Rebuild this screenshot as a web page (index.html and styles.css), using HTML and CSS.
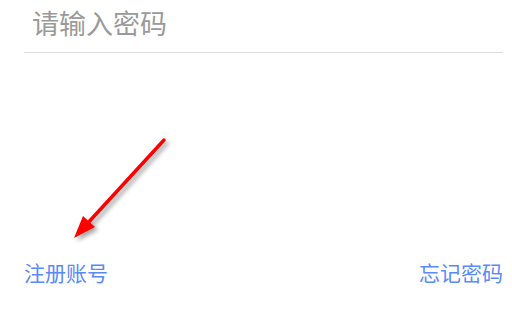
FILE: index.html
```html
<!DOCTYPE html>
<html lang="zh-CN">
<head>
<meta charset="utf-8">
<title>登录</title>
<link rel="stylesheet" href="styles.css">
</head>
<body>
<div class="page">
  <div class="field">
    <input class="pwd" type="password" placeholder="请输入密码">
  </div>
  <div class="links">
    <a class="link" href="#">注册账号</a>
    <a class="link" href="#">忘记密码</a>
  </div>
  <svg class="arrow" width="512" height="323" viewBox="0 0 512 323" aria-hidden="true">
    <defs>
      <filter id="shadow" x="-20%" y="-20%" width="140%" height="140%">
        <feDropShadow dx="3" dy="3" stdDeviation="2" flood-color="#000" flood-opacity="0.35"/>
      </filter>
    </defs>
    <g filter="url(#shadow)">
      <line x1="164" y1="140" x2="86" y2="225" stroke="#ff0000" stroke-width="3.5" stroke-linecap="round"/>
      <polygon points="74,238 83,216 95,227" fill="#ff0000"/>
    </g>
  </svg>
</div>
</body>
</html>
```

FILE: styles.css
```css
html, body {
  margin: 0;
  padding: 0;
  background: #ffffff;
}
body {
  font-family: "Noto Sans CJK SC", "Noto Sans", sans-serif;
}
.page {
  position: relative;
  width: 512px;
  height: 323px;
  padding: 0 9px 0 24px;
  box-sizing: border-box;
  display: flex;
  flex-direction: column;
}
.field {
  height: 53px;
  border-bottom: 1px solid #dddddd;
  box-sizing: border-box;
  display: flex;
}
.pwd {
  flex: 1;
  border: none;
  outline: none;
  background: transparent;
  padding: 0 0 8px 8px;
  margin: 0;
  font-family: inherit;
  font-size: 27px;
  color: #333;
}
.pwd::placeholder {
  color: #9a9a9a;
}
.links {
  margin-top: 206px;
  display: flex;
  justify-content: space-between;
  line-height: 26px;
}
.link {
  font-size: 21px;
  color: #5b8af7;
  text-decoration: none;
}
.arrow {
  position: absolute;
  left: 0;
  top: 0;
  pointer-events: none;
}
```
